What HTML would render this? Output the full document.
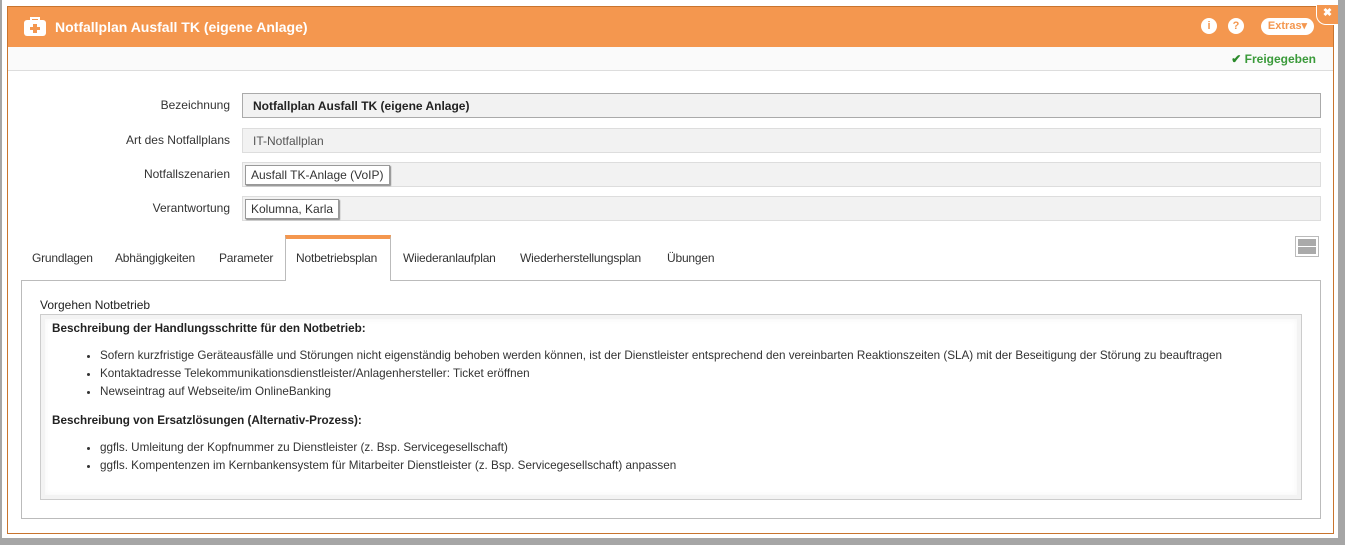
<!DOCTYPE html>
<html><head><meta charset="utf-8"><style>
*{box-sizing:border-box;margin:0;padding:0}
body{width:1345px;height:545px;background:#a6a6a6;font-family:"Liberation Sans",sans-serif;font-size:12px;color:#333;position:relative;overflow:hidden}
.frame{position:absolute;left:2px;top:0;width:1336px;height:538px;background:#fff}
.win{position:absolute;left:7px;top:6px;width:1327px;height:528px;border:1px solid #c8742e;background:#fff}
.hdr{position:absolute;left:0;top:0;right:0;height:40px;background:#f4974f;color:#fff;font-weight:bold;font-size:14px}
.hdr .t{position:absolute;left:47px;top:12px}
.stat{position:absolute;left:0;right:0;top:40px;height:24px;background:#fafafa;border-bottom:1px solid #ddd}
.lbl{position:absolute;width:222px;text-align:right;font-size:12px;color:#333}
.box{position:absolute;left:234px;width:1079px;background:#f2f2f2;border:1px solid #ddd;height:25px;padding:5px 10px;color:#555}
.chip{display:inline-block;background:#fff;border:1px solid #999;box-shadow:1px 1px 1px #888;padding:2px 5px;color:#333;margin:-3px 0 0 -8px}
.tab{position:absolute;top:244px;color:#333;font-size:12px;letter-spacing:-0.2px}
.content{position:absolute;left:13px;top:273px;width:1300px;height:239px;border:1px solid #bbb;background:#fff}
.ed{position:absolute;left:18px;top:33px;width:1262px;height:186px;border:1px solid #ccc;box-shadow:inset 0 0 0 4px #f3f3f3,inset 0 0 6px 5px #f7f7f7;padding:7px 11px;font-size:11.7px}
.ed b{display:block;color:#222}
.ed ul{margin:12px 0 13px 48px}
.ed li{line-height:18px;color:#333}
</style></head><body>
<div class="frame"></div>
<div class="win">
 <div class="hdr">
  <svg style="position:absolute;left:16px;top:9px" width="22" height="20" viewBox="0 0 22 20"><path d="M7 4V2h8v2" fill="none" stroke="#fff" stroke-width="2"/><rect x="0" y="4" width="22" height="16" rx="3" fill="#fff"/><path d="M9 8h4v3h3v3h-3v3h-4v-3H6v-3h3z" fill="#f4974f"/></svg>
  <div class="t">Notfallplan Ausfall TK (eigene Anlage)</div>
  <div style="position:absolute;left:1193px;top:11px;width:16px;height:16px;border-radius:50%;background:#fff;color:#f4974f;font-size:11px;text-align:center;line-height:16px">i</div>
  <div style="position:absolute;left:1220px;top:11px;width:16px;height:16px;border-radius:50%;background:#fff;color:#f4974f;font-size:11px;text-align:center;line-height:16px">?</div>
  <div style="position:absolute;left:1253px;top:11px;width:53px;height:17px;border-radius:9px;background:#fff;color:#f4974f;font-size:11px;text-align:center;line-height:17px">Extras▾</div>
  <div style="position:absolute;left:1308px;top:-2px;width:22px;height:20px;background:#f4974f;border-left:1px solid #fff;border-bottom:1px solid #fff;border-bottom-left-radius:10px;color:#fff;font-size:11px;text-align:center;line-height:16px">✖</div>
 </div>
 <div class="stat"><div style="position:absolute;right:17px;top:5px;color:#3a9a3a;font-weight:bold;font-size:12px"><span style="color:#2a8a2a">✔</span> Freigegeben</div></div>
 <div class="lbl" style="top:91px">Bezeichnung</div>
 <div class="box" style="top:86px;border-color:#aaa;font-weight:bold;color:#222">Notfallplan Ausfall TK (eigene Anlage)</div>
 <div class="lbl" style="top:126px">Art des Notfallplans</div>
 <div class="box" style="top:121px">IT-Notfallplan</div>
 <div class="lbl" style="top:160px">Notfallszenarien</div>
 <div class="box" style="top:155px"><span class="chip">Ausfall TK-Anlage (VoIP)</span></div>
 <div class="lbl" style="top:194px">Verantwortung</div>
 <div class="box" style="top:189px"><span class="chip">Kolumna, Karla</span></div>
 <div style="position:absolute;left:277px;top:228px;width:106px;height:46px;border:1px solid #bbb;border-top:4px solid #f4974f;border-bottom:none;background:#fff;z-index:2"></div>
 <div class="tab" style="left:24px">Grundlagen</div>
 <div class="tab" style="left:107px">Abhängigkeiten</div>
 <div class="tab" style="left:211px">Parameter</div>
 <div class="tab" style="left:288px;z-index:3">Notbetriebsplan</div>
 <div class="tab" style="left:395px">Wiiederanlaufplan</div>
 <div class="tab" style="left:512px">Wiederherstellungsplan</div>
 <div class="tab" style="left:659px">Übungen</div>
 <div style="position:absolute;left:1287px;top:229px;width:24px;height:21px;border:1px solid #bbb;padding:2px"><div style="height:7px;background:#aaa"></div><div style="height:7px;background:#aaa;margin-top:1px"></div></div>
 <div class="content">
  <div style="position:absolute;left:18px;top:17px;color:#222">Vorgehen Notbetrieb</div>
  <div class="ed">
   <b>Beschreibung der Handlungsschritte für den Notbetrieb:</b>
   <ul>
    <li>Sofern kurzfristige Geräteausfälle und Störungen nicht eigenständig behoben werden können, ist der Dienstleister entsprechend den vereinbarten Reaktionszeiten (SLA) mit der Beseitigung der Störung zu beauftragen</li>
    <li>Kontaktadresse Telekommunikationsdienstleister/Anlagenhersteller: Ticket eröffnen</li>
    <li>Newseintrag auf Webseite/im OnlineBanking</li>
   </ul>
   <b>Beschreibung von Ersatzlösungen (Alternativ-Prozess):</b>
   <ul>
    <li>ggfls. Umleitung der Kopfnummer zu Dienstleister (z. Bsp. Servicegesellschaft)</li>
    <li>ggfls. Kompentenzen im Kernbankensystem für Mitarbeiter Dienstleister (z. Bsp. Servicegesellschaft) anpassen</li>
   </ul>
  </div>
 </div>
</div>
</body></html>
